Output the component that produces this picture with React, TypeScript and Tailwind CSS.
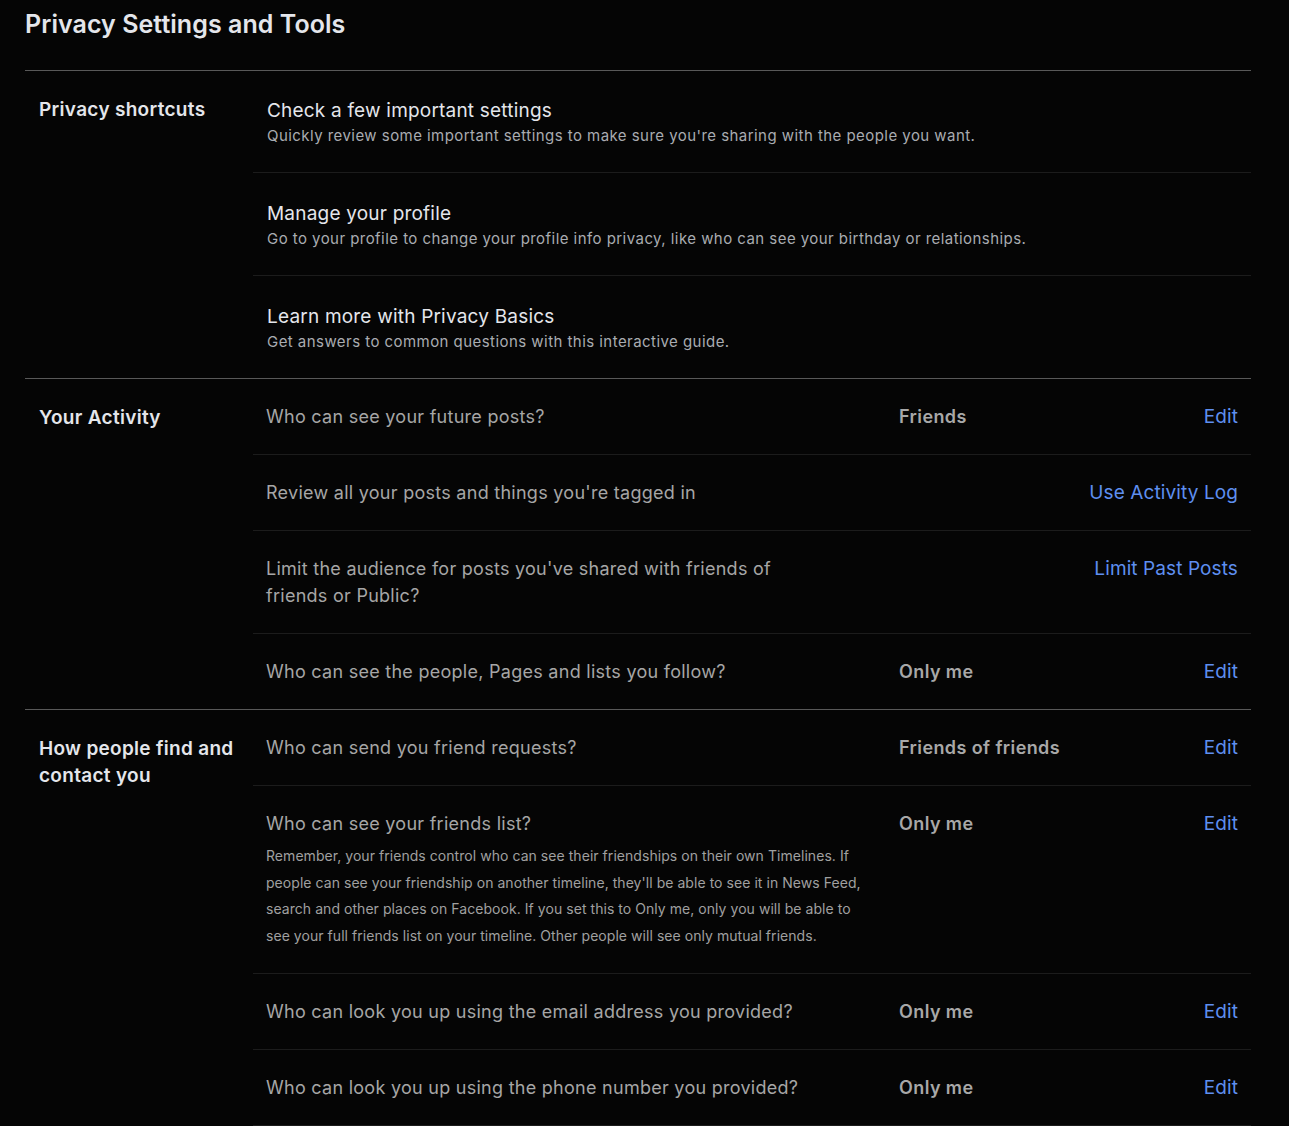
import React from "react";

type Row = {
  q: string;
  desc?: string;
  value?: string;
  action: string;
  narrow?: boolean;
};

const shortcuts = [
  {
    t: "Check a few important settings",
    s: "Quickly review some important settings to make sure you're sharing with the people you want.",
  },
  {
    t: "Manage your profile",
    s: "Go to your profile to change your profile info privacy, like who can see your birthday or relationships.",
  },
  {
    t: "Learn more with Privacy Basics",
    s: "Get answers to common questions with this interactive guide.",
  },
];

const activity: Row[] = [
  { q: "Who can see your future posts?", value: "Friends", action: "Edit" },
  { q: "Review all your posts and things you're tagged in", action: "Use Activity Log" },
  {
    q: "Limit the audience for posts you've shared with friends of friends or Public?",
    action: "Limit Past Posts",
    narrow: true,
  },
  { q: "Who can see the people, Pages and lists you follow?", value: "Only me", action: "Edit" },
];

const findContact: Row[] = [
  { q: "Who can send you friend requests?", value: "Friends of friends", action: "Edit" },
  {
    q: "Who can see your friends list?",
    desc: "Remember, your friends control who can see their friendships on their own Timelines. If people can see your friendship on another timeline, they'll be able to see it in News Feed, search and other places on Facebook. If you set this to Only me, only you will be able to see your full friends list on your timeline. Other people will see only mutual friends.",
    value: "Only me",
    action: "Edit",
  },
  { q: "Who can look you up using the email address you provided?", value: "Only me", action: "Edit" },
  { q: "Who can look you up using the phone number you provided?", value: "Only me", action: "Edit" },
];

function SettingRow({ row, last }: { row: Row; last: boolean }) {
  return (
    <div
      className={
        "flex items-start pl-[13px] pr-[13px] pt-[25px] pb-[24px] " +
        (last ? "" : "border-b border-[#1c1c1c]")
      }
    >
      <div className="w-[633px] shrink-0">
        <div
          className={
            "text-[18px] tracking-[0.27px] text-[#a6a6a6] " +
            (row.narrow ? "max-w-[530px] leading-[26.5px]" : "leading-[26px]")
          }
        >
          {row.q}
        </div>
        {row.desc && (
          <div className="mt-[6px] w-[600px] text-[14px] leading-[26.6px] tracking-[0.05px] text-[#a0a0a0]">
            {row.desc}
          </div>
        )}
      </div>
      <div className="flex-1 text-[18px] leading-[26px] tracking-[0.4px] font-semibold text-[#a8a8a8]">
        {row.value ?? ""}
      </div>
      <div className="text-[19px] leading-[26px] tracking-[0.1px] text-[#5e8ff0] text-right">
        {row.action}
      </div>
    </div>
  );
}

function Section({ label, children }: { label: React.ReactNode; children: React.ReactNode }) {
  return (
    <div className="flex border-t border-[#595959]">
      <div className="w-[228px] shrink-0 pl-[14px] pt-[25px] text-[19px] leading-[27px] tracking-[0.3px] font-semibold text-[#e4e6eb]">
        {label}
      </div>
      <div className="flex-1">{children}</div>
    </div>
  );
}

export default function App() {
  return (
    <div
      className="min-h-[1126px] bg-[#050505] pt-[8px] pl-[25px]"
      style={{ fontFamily: "Inter, 'Noto Sans', sans-serif" }}
    >
      <div className="w-[1226px]">
        <h1 className="text-[25px] leading-[32px] tracking-[0.05px] font-semibold text-[#e4e6eb] mb-[30px]">
          Privacy Settings and Tools
        </h1>
        <Section label="Privacy shortcuts">
          {shortcuts.map((s, i) => (
            <div
              key={s.t}
              className={
                "pl-[14px] pr-[14px] " +
                (i === 0 ? "pt-[27px] " : "pt-[28px] ") +
                "pb-[23px] " +
                (i < shortcuts.length - 1 ? "border-b border-[#1c1c1c]" : "")
              }
            >
              <div className="text-[19px] leading-[25px] tracking-[0.2px] text-[#e4e6eb]">{s.t}</div>
              <div className="text-[15px] leading-[26px] tracking-[0.45px] text-[#a9acb1]">{s.s}</div>
            </div>
          ))}
        </Section>
        <Section label="Your Activity">
          {activity.map((r, i) => (
            <SettingRow key={r.q} row={r} last={i === activity.length - 1} />
          ))}
        </Section>
        <Section
          label={
            <>
              How people find and
              <br />
              contact you
            </>
          }
        >
          {findContact.map((r) => (
            <SettingRow key={r.q} row={r} last={false} />
          ))}
        </Section>
      </div>
    </div>
  );
}
